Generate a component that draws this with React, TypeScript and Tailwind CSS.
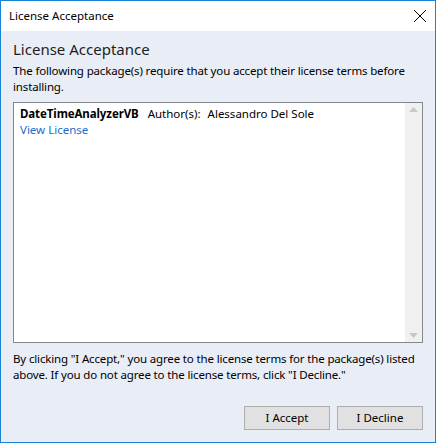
import React from "react";

export default function App() {
  return (
    <div
      className="w-[436px] h-[443px] flex flex-col border border-[#1883d7] bg-[#e9edf6] text-[#000] text-[11.5px] overflow-hidden"
      style={{ fontFamily: '"Noto Sans", "Open Sans", sans-serif' }}
    >
      {/* Title bar */}
      <div className="h-[30px] bg-white flex items-center justify-between pl-[8px] pr-[7px] shrink-0">
        <span className="text-[11.5px] text-black">License Acceptance</span>
        <svg width="14" height="14" viewBox="0 0 14 14" className="mr-[1px]">
          <path d="M1 1 L13 13 M13 1 L1 13" stroke="#000" strokeWidth="1" />
        </svg>
      </div>

      {/* Body */}
      <div className="flex flex-col flex-1 px-[12px] pt-[7px] pb-[12px]">
        <h1 className="text-[15px] leading-[22px] text-[#1e1e1e]">License Acceptance</h1>
        <p className="mt-[3px] leading-[16px] tracking-[-0.15px]">
          The following package(s) require that you accept their license terms before installing.
        </p>

        {/* List box */}
        <div className="mt-[7px] h-[241px] flex bg-white border border-[#828790]">
          <div className="flex-1 px-[6px] pt-[3px]">
            <div className="flex items-baseline leading-[16px]">
              <span className="font-bold tracking-[-0.1px]">DateTimeAnalyzerVB</span>
              <span className="ml-[9px]">Author(s):</span>
              <span className="ml-[7px]">Alessandro Del Sole</span>
            </div>
            <a className="text-[#1a6dc7] leading-[16px] block">View License</a>
          </div>
          <div className="w-[17px] bg-[#f0f0f0] flex flex-col justify-between items-center py-[4px]">
            <svg width="9" height="5" viewBox="0 0 9 5">
              <path d="M0 5 L4.5 0 L9 5 Z" fill="#c8c8c8" />
            </svg>
            <svg width="9" height="5" viewBox="0 0 9 5">
              <path d="M0 0 L4.5 5 L9 0 Z" fill="#c8c8c8" />
            </svg>
          </div>
        </div>

        <p className="mt-[8px] leading-[16px] tracking-[-0.15px]">
          By clicking "I Accept," you agree to the license terms for the package(s) listed above. If you do not agree to the license terms, click "I Decline."
        </p>

        <div className="mt-auto flex justify-end gap-[7px]">
          <button className="w-[86px] h-[24px] bg-[#e1e1e1] border border-[#adadad]">
            I Accept
          </button>
          <button className="w-[86px] h-[24px] bg-[#e1e1e1] border border-[#adadad]">
            I Decline
          </button>
        </div>
      </div>
    </div>
  );
}
